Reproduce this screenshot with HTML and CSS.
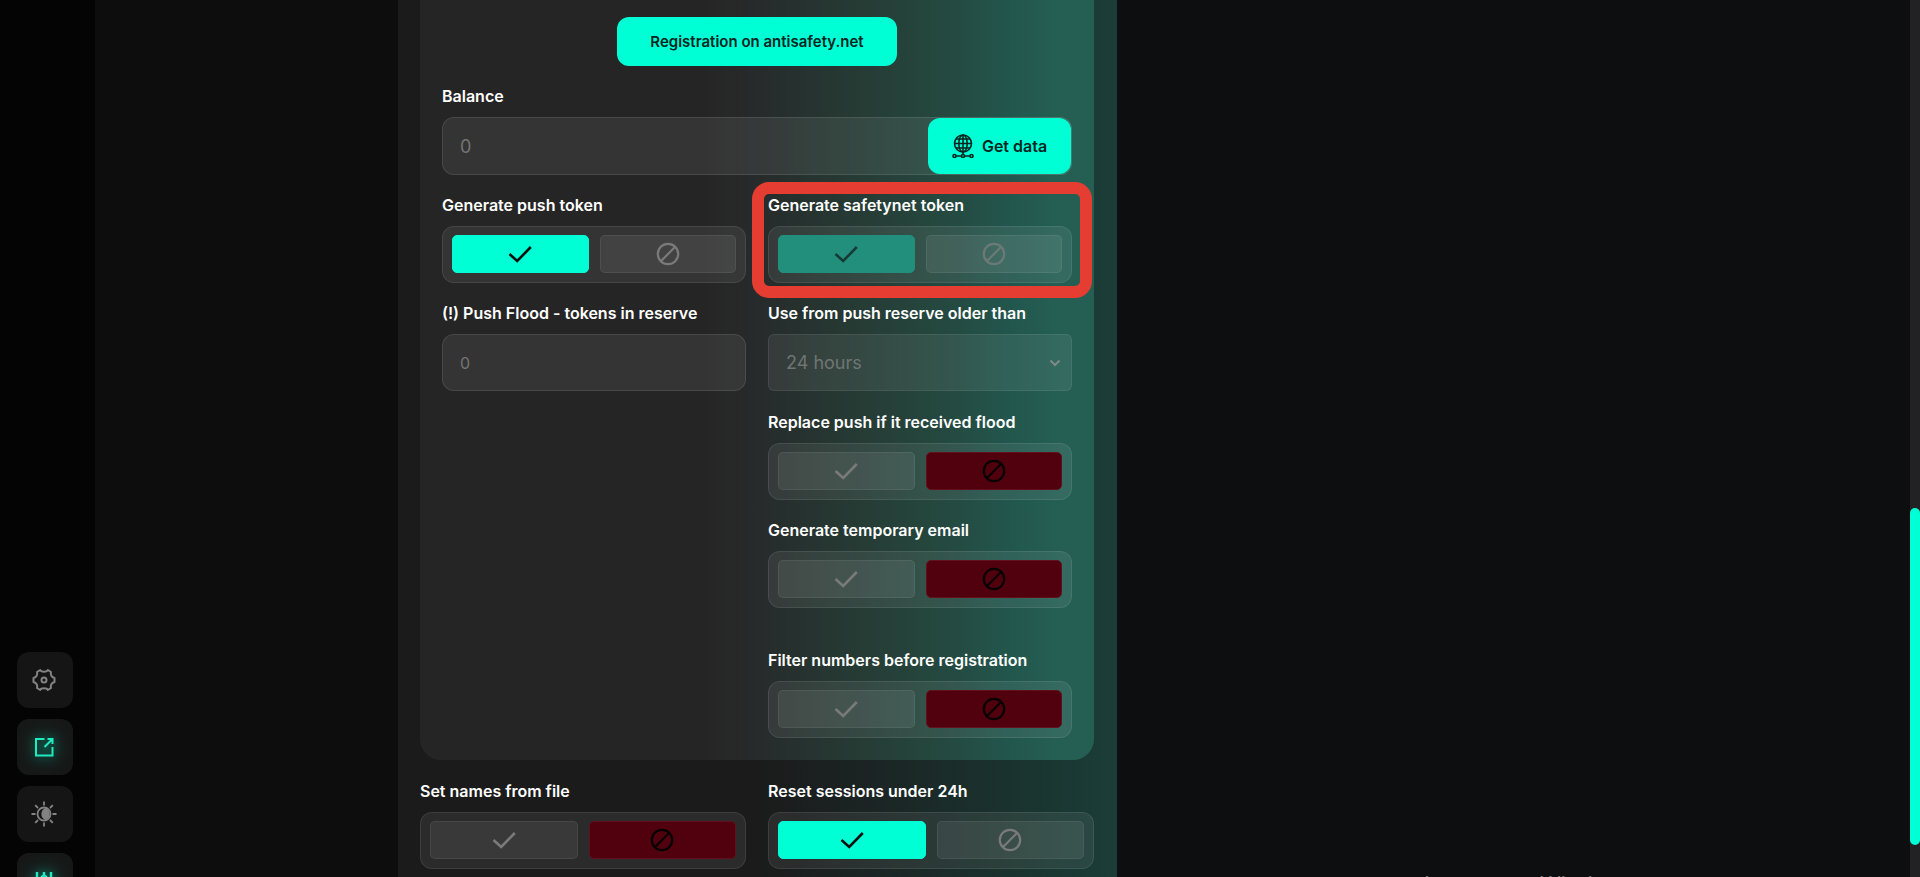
FILE: index.html
```html
<!DOCTYPE html>
<html lang="en">
<head>
<meta charset="utf-8">
<title>Account settings</title>
<link rel="stylesheet" href="styles.css">
</head>
<body>
<svg class="defs" aria-hidden="true">
  <symbol id="check" viewBox="0 0 24 24"><path d="M1.500 12 9.200 19 22.800 5" fill="none" stroke="currentColor" stroke-width="2.600"/></symbol>
  <symbol id="ban" viewBox="0 0 24 24"><circle cx="12" cy="12" r="10.200" fill="none" stroke="currentColor" stroke-width="2.200"/><path d="M4.800 19.200 19.200 4.800" stroke="currentColor" stroke-width="2.200"/></symbol>
</svg>
<div class="app">
  <nav class="sidebar">
    <button class="nav-btn" aria-label="Settings"><svg width="24" height="24" viewBox="0 0 24 24" fill="none" stroke="currentColor" stroke-width="2" stroke-linejoin="round"><path d="M8.200 2C9 4.200 15 4.200 15.800 2L19 4C18.200 7 19.500 9.300 22.500 10V14C19.500 14.700 18.200 17 19 20L15.800 22C15 19.800 9 19.800 8.200 22L5 20C5.800 17 4.500 14.700 1.500 14V10C4.500 9.300 5.800 7 5 4Z"/><circle cx="12" cy="12" r="2.500"/></svg></button>
    <button class="nav-btn active" aria-label="Export"><svg width="24" height="24" viewBox="0 0 24 24" fill="none" stroke="currentColor" stroke-width="2"><path d="M12.500 4H4v16.500h16.500V12M15.500 4h5v5M20.500 4l-8 8"/></svg></button>
    <button class="nav-btn" aria-label="Theme"><svg width="26" height="26" viewBox="0 0 26 26" fill="none" stroke="currentColor" stroke-width="1.800"><circle cx="13" cy="13" r="6.500"/><path d="M14.500 8a5.500 5.500 0 0 1 0 10 5.500 5.500 0 0 1 0-10z" fill="currentColor"/><path d="M13 .5v4M13 21.500v4M.5 13h4M21.500 13h4M4.200 4.200l2.800 2.800M19 19l2.800 2.800M4.200 21.800l2.800-2.800M19 7l2.800-2.800"/></svg></button>
    <button class="nav-btn active" aria-label="Filters"><svg width="24" height="24" viewBox="0 0 24 24" fill="none" stroke="currentColor" stroke-width="2.400"><path d="M5 3v11M12 3v4M12 12v9M19 3v11M5 20v1M19 20v1"/><circle cx="12" cy="9.500" r="2.500"/><circle cx="5" cy="17" r="2.500"/><circle cx="19" cy="17" r="2.500"/></svg></button>
  </nav>
  <main class="page">
    <form class="panel">
      <section class="card">
        <button type="button" class="primary register">Registration on antisafety.net</button>
        <div class="field">
          <label class="title" for="balance">Balance</label>
          <div class="balance">
            <input id="balance" class="box tall" type="text" placeholder="0">
            <button type="button" class="primary get"><svg width="22" height="24" viewBox="0 0 22 24" fill="none" stroke="currentColor" stroke-width="1.600"><circle cx="11" cy="9.500" r="8.500"/><ellipse cx="11" cy="9.500" rx="4.200" ry="8.500"/><path d="M11 1v19M2.500 9.500h17M4 5h14M4 14h14M4 22h5M13 22h5"/><circle cx="2.500" cy="22" r="1.500"/><circle cx="11" cy="22" r="1.500"/><circle cx="19.500" cy="22" r="1.500"/></svg>Get data</button>
          </div>
        </div>
        <div class="columns">
          <div class="column">
            <fieldset class="field"><legend class="title">Generate push token</legend>
              <div class="toggle">
                <label class="opt yes"><input type="radio" name="push" aria-label="On" checked><svg><use href="#check"/></svg></label>
                <label class="opt no"><input type="radio" name="push" aria-label="Off"><svg><use href="#ban"/></svg></label>
              </div>
            </fieldset>
            <div class="field"><label class="title" for="flood">(!) Push Flood - tokens in reserve</label>
              <input id="flood" class="box" type="text" placeholder="0"></div>
          </div>
          <div class="column">
            <fieldset class="field marked"><legend class="title">Generate safetynet token</legend>
              <div class="toggle disabled">
                <label class="opt yes"><input type="radio" name="safety" aria-label="On" checked disabled><svg><use href="#check"/></svg></label>
                <label class="opt no"><input type="radio" name="safety" aria-label="Off" disabled><svg><use href="#ban"/></svg></label>
              </div>
            </fieldset>
            <div class="field age"><label class="title" for="age">Use from push reserve older than</label>
              <div class="select"><select id="age" class="box"><option>24 hours</option></select><svg width="12" height="8" viewBox="0 0 12 8"><path d="M1.500 1.500 6 6l4.500-4.500" fill="none" stroke="currentColor" stroke-width="2"/></svg></div></div>
            <fieldset class="field"><legend class="title">Replace push if it received flood</legend>
              <div class="toggle">
                <label class="opt yes"><input type="radio" name="replace" aria-label="On"><svg><use href="#check"/></svg></label>
                <label class="opt no"><input type="radio" name="replace" aria-label="Off" checked><svg><use href="#ban"/></svg></label>
              </div>
            </fieldset>
            <fieldset class="field spaced"><legend class="title">Generate temporary email</legend>
              <div class="toggle">
                <label class="opt yes"><input type="radio" name="email" aria-label="On"><svg><use href="#check"/></svg></label>
                <label class="opt no"><input type="radio" name="email" aria-label="Off" checked><svg><use href="#ban"/></svg></label>
              </div>
            </fieldset>
            <fieldset class="field"><legend class="title">Filter numbers before registration</legend>
              <div class="toggle">
                <label class="opt yes"><input type="radio" name="filter" aria-label="On"><svg><use href="#check"/></svg></label>
                <label class="opt no"><input type="radio" name="filter" aria-label="Off" checked><svg><use href="#ban"/></svg></label>
              </div>
            </fieldset>
          </div>
        </div>
      </section>
      <div class="columns">
        <fieldset class="field"><legend class="title">Set names from file</legend>
          <div class="toggle">
            <label class="opt yes"><input type="radio" name="names" aria-label="On"><svg><use href="#check"/></svg></label>
            <label class="opt no"><input type="radio" name="names" aria-label="Off" checked><svg><use href="#ban"/></svg></label>
          </div>
        </fieldset>
        <fieldset class="field"><legend class="title">Reset sessions under 24h</legend>
          <div class="toggle">
            <label class="opt yes"><input type="radio" name="reset" aria-label="On" checked><svg><use href="#check"/></svg></label>
            <label class="opt no"><input type="radio" name="reset" aria-label="Off"><svg><use href="#ban"/></svg></label>
          </div>
        </fieldset>
      </div>
    </form>
  </main>
  <aside class="backdrop"><p class="watermark">Активация Windows</p></aside>
  <div class="scroll"><div class="thumb"></div></div>
</div>
</body>
</html>
```
FILE: styles.css
```css
* { box-sizing: border-box; }
body { margin: 0; background: #0d0e10; color: #fff; font-family: Inter, "Open Sans", sans-serif; font-size: 16px; }
button, input, select { font: inherit; }
.defs { position: absolute; width: 0; height: 0; }
.app { display: flex; height: 100vh; overflow: hidden; }

.sidebar { flex: none; width: 95px; padding: 652px 0 0 17px; display: flex; flex-direction: column; gap: 11px; background: #040404; }
.nav-btn { flex: none; width: 56px; height: 56px; padding: 0 2px 0 0; border: 0; border-radius: 12px; background: #151515; color: #838383; display: flex; align-items: center; justify-content: center; }
.nav-btn.active { color: #1feac0; background: radial-gradient(circle, #12302a 0, #161d1b 45%, #161717 75%); }
.nav-btn.active svg { filter: drop-shadow(0 0 6px rgba(0, 255, 213, .5)); }

.page { flex: 0 0 1022px; display: flex; justify-content: flex-end; background: #0d0d0d; }
.panel { width: 719px; padding: 0 23px 0 22px; background: linear-gradient(90deg, #1b1b1b 50%, #1b2424 66%, #1a332e 86%, #1b3d38); }
.card { padding: 17px 22px 22px; border-radius: 0 0 21px 21px; background: linear-gradient(90deg, #252525 0, #262525 42%, #272a2a 49%, #262f2d 54%, #263c35 66%, #244a41 79%, #22574e 88%, #255f53 95%); display: flex; flex-direction: column; }
.primary { border: 0; border-radius: 12px; background: #00ffd5; color: #06251f; font-weight: 600; font-size: 15px; }
.register { align-self: center; width: 280px; height: 49px; margin-bottom: 19px; }

.field { border: 0; margin: 0; padding: 0; min-width: 0; display: flex; flex-direction: column; margin-bottom: 19px; }
.title { display: block; padding: 0; line-height: 22px; font-weight: 600; margin-bottom: 10px; white-space: nowrap; }
.box { width: 100%; height: 57px; padding: 0 17px; color: #6f7573; border: 1px solid rgba(255, 255, 255, .1); border-radius: 12px; background: rgba(255, 255, 255, .07); outline: 0; }
.box::placeholder { color: #747474; opacity: 1; }
.tall { height: 58px; font-size: 18px; }
.balance { display: flex; position: relative; }
.get { position: absolute; right: 1px; top: 1px; bottom: 1px; width: 143px; display: flex; align-items: center; justify-content: center; gap: 8px; font-size: 16px; }

.columns { display: grid; grid-template-columns: 1fr 1fr; gap: 22px; }
.column .age { margin-bottom: 20px; }
.column .field:last-child { margin-bottom: 0; }
.column .spaced { margin-bottom: 41px; }
.panel > .columns { padding-top: 20px; }
.toggle { height: 57px; padding: 8px 9px 9px; display: grid; grid-template-columns: 1fr 1fr; gap: 11px; border: 1px solid rgba(255, 255, 255, .09); border-radius: 12px; background: rgba(255, 255, 255, .07); }
.opt { display: flex; align-items: center; justify-content: center; border: 1px solid rgba(255, 255, 255, .07); border-radius: 5px; background: rgba(255, 255, 255, .07); color: #7a7a7a; }
.opt input { appearance: none; width: 0; height: 0; margin: 0; }
.opt svg { width: 24px; height: 24px; }
.opt.yes:has(:checked) { background: #00ffd5; border-color: #00ffd5; color: #06110f; }
.opt.no:has(:checked) { background: #51000d; border-color: #64101c; color: #080103; }
.disabled .yes:has(:checked) { background: #218f7c; border-color: #218f7c; color: #163b35; }
.disabled .no { color: #6c7a76; }
.select { display: flex; align-items: center; position: relative; color: #7e8a87; }
.select select { appearance: none; font-size: 18px; border-radius: 6px; border-color: rgba(255, 255, 255, .08); }
.select svg { position: absolute; right: 11px; }
.marked { position: relative; }
.marked::after { content: ""; position: absolute; inset: -44px -20px -15px -16px; border: 12px solid #e63d33; border-radius: 17px; pointer-events: none; }

.backdrop { flex: 1; display: flex; flex-direction: column; justify-content: flex-end; overflow: hidden; }
.watermark { margin: 0 0 -19px 303px; font: 22px/26px "Open Sans", sans-serif; color: #77797b; white-space: nowrap; }
.scroll { flex: none; width: 10px; padding-top: 508px; background: #222124; }
.thumb { height: 337px; border-radius: 5px; background: #00ffd5; }
```
